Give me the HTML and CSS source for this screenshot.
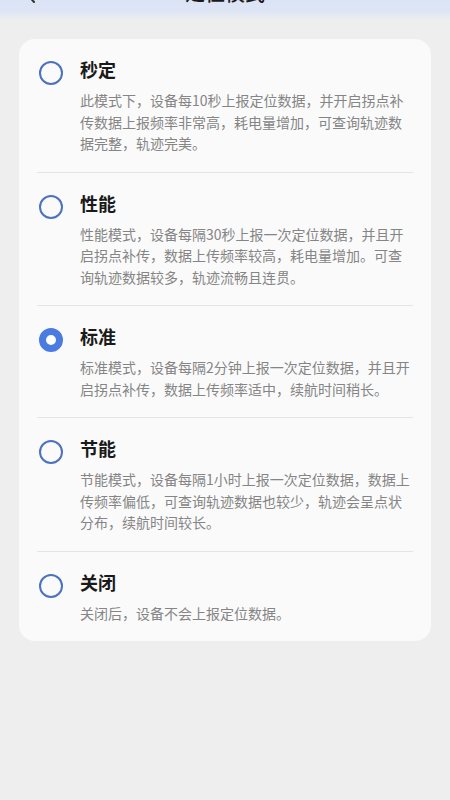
FILE: index.html
```html
<!DOCTYPE html>
<html lang="zh-CN">

<head>
    <meta charset="UTF-8">
    <meta name="viewport" content="width=device-width, initial-scale=1.0">
    <title>定位模式</title>
    <link rel="stylesheet" href="styles.css">
</head>

<body>
    <header class="top-bar">
        <span class="back">
            <svg width="12" height="20" viewBox="0 0 12 20"><path d="M10 1 L2 10 L10 19" fill="none" stroke="#333" stroke-width="2" stroke-linecap="round" stroke-linejoin="round"/></svg>
        </span>
        <h1 class="title">定位模式</h1>
    </header>

    <div class="mode-card">
        <div class="mode-item">
            <span class="radio"></span>
            <div class="mode-text">
                <div class="mode-name">秒定</div>
                <p class="mode-desc">此模式下，设备每10秒上报定位数据，并开启拐点补传数据上报频率非常高，耗电量增加，可查询轨迹数据完整，轨迹完美。</p>
            </div>
        </div>
        <div class="mode-item">
            <span class="radio"></span>
            <div class="mode-text">
                <div class="mode-name">性能</div>
                <p class="mode-desc">性能模式，设备每隔30秒上报一次定位数据，并且开启拐点补传，数据上传频率较高，耗电量增加。可查询轨迹数据较多，轨迹流畅且连贯。</p>
            </div>
        </div>
        <div class="mode-item">
            <span class="radio checked"></span>
            <div class="mode-text">
                <div class="mode-name">标准</div>
                <p class="mode-desc">标准模式，设备每隔2分钟上报一次定位数据，并且开启拐点补传，数据上传频率适中，续航时间稍长。</p>
            </div>
        </div>
        <div class="mode-item">
            <span class="radio"></span>
            <div class="mode-text">
                <div class="mode-name">节能</div>
                <p class="mode-desc">节能模式，设备每隔1小时上报一次定位数据，数据上传频率偏低，可查询轨迹数据也较少，轨迹会呈点状分布，续航时间较长。</p>
            </div>
        </div>
        <div class="mode-item">
            <span class="radio"></span>
            <div class="mode-text">
                <div class="mode-name">关闭</div>
                <p class="mode-desc">关闭后，设备不会上报定位数据。</p>
            </div>
        </div>
    </div>
</body>

</html>
```

FILE: styles.css
```css
body {
    margin: 0;
    min-height: 800px;
    background-color: #eeeeee;
    font-family: "Noto Sans CJK SC", "Noto Sans", sans-serif;
}

.top-bar {
    height: 20px;
    overflow: hidden;
    position: relative;
    background: linear-gradient(to bottom, #dbe3f6 0%, #dde5f5 55%, #eeeeee 100%);
}

.back {
    position: absolute;
    left: 24px;
    top: -17px;
}

.title {
    margin: -21px 0 0;
    text-align: center;
    font-size: 20px;
    line-height: 28px;
    font-weight: 500;
    color: #1a1a1a;
}

.mode-card {
    margin: 19px 19px 0;
    padding: 0 18px;
    background-color: #fafafa;
    border-radius: 16px;
}

.mode-item {
    display: flex;
    padding: 18px 0 17px;
    border-bottom: 1px solid #e4e4e4;
}

.mode-item:last-child {
    border-bottom: none;
}

.radio {
    flex: none;
    box-sizing: border-box;
    width: 24px;
    height: 24px;
    margin: 4px 17px 0 2px;
    border: 2px solid #4b72c0;
    border-radius: 50%;
}

.radio.checked {
    border: 7px solid #4a7be0;
    background-color: #fff;
}

.mode-text {
    flex: 1;
}

.mode-name {
    font-size: 18px;
    line-height: 24px;
    font-weight: 700;
    color: #1a1a1a;
}

.mode-desc {
    margin: 9px 0 0;
    font-size: 14px;
    line-height: 21.5px;
    color: #858585;
}
```
